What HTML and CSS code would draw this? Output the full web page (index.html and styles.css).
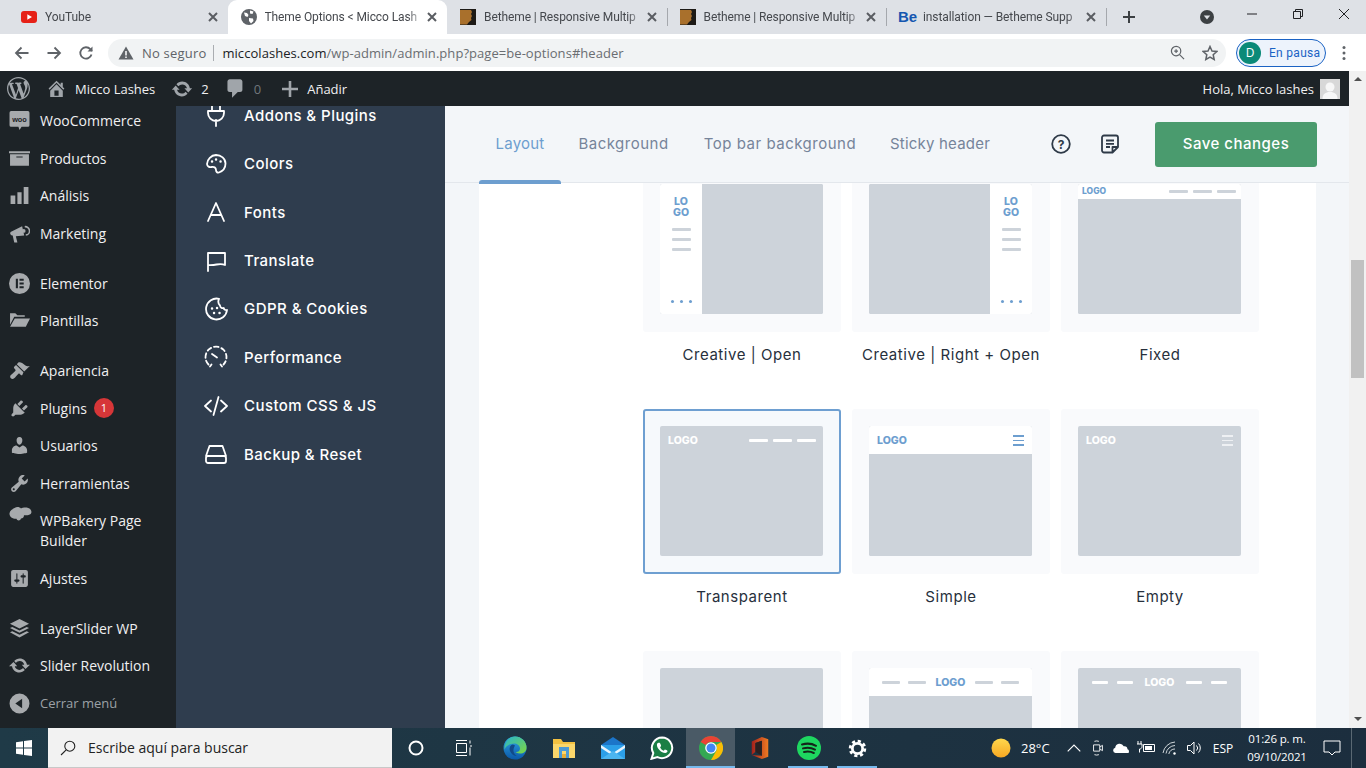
FILE: index.html
```html
<!DOCTYPE html>
<html lang="es">
<head>
<meta charset="utf-8">
<title>Theme Options &lt; Micco Lashes</title>
<link rel="stylesheet" href="styles.css">
</head>
<body>
<div class="tabstrip">
  <div class="tab">
    <svg class="fav" viewBox="0 0 16 16"><rect y="2" width="16" height="12" rx="3" fill="#e62117"/><path d="M6.3 5.2v5.6L11 8z" fill="#fff"/></svg>
    <span class="tab-title">YouTube</span>
    <svg class="tab-x" viewBox="0 0 10 10"><path d="M1 1l8 8M9 1l-8 8"/></svg>
  </div>
  <div class="tab active">
    <svg class="fav" viewBox="0 0 16 16"><circle cx="8" cy="8" r="8" fill="#5f6368"/><path d="M3 3.5l3 .5 1.500 2-1 2-2.500-1zM9 1.500l3.500 1-1 2.500-2.500-.5zM8 9l4 .5.500 2.500-2.500 2.500L8 12z" fill="#fff"/></svg>
    <span class="tab-title">Theme Options &lt; Micco Lash</span>
    <svg class="tab-x" viewBox="0 0 10 10"><path d="M1 1l8 8M9 1l-8 8"/></svg>
  </div>
  <div class="tab sep">
    <svg class="fav" viewBox="0 0 16 16"><rect width="16" height="16" fill="#1d1a16"/><path d="M0 1h11l1 2-1 2 1 2-1 2 .5 2L9 13l-2 2.500H0z" fill="#a9702c"/></svg>
    <span class="tab-title">Betheme | Responsive Multip</span>
    <svg class="tab-x" viewBox="0 0 10 10"><path d="M1 1l8 8M9 1l-8 8"/></svg>
  </div>
  <div class="tab sep">
    <svg class="fav" viewBox="0 0 16 16"><rect width="16" height="16" fill="#1d1a16"/><path d="M0 1h11l1 2-1 2 1 2-1 2 .5 2L9 13l-2 2.500H0z" fill="#a9702c"/></svg>
    <span class="tab-title">Betheme | Responsive Multip</span>
    <svg class="tab-x" viewBox="0 0 10 10"><path d="M1 1l8 8M9 1l-8 8"/></svg>
  </div>
  <div class="tab sep be-tab">
    <span class="be-fav">Be</span>
    <span class="tab-title">installation — Betheme Supp</span>
    <svg class="tab-x" viewBox="0 0 10 10"><path d="M1 1l8 8M9 1l-8 8"/></svg>
  </div>
  <svg class="new-tab" viewBox="0 0 14 14"><path d="M7 1v12M1 7h12"/></svg>
  <svg class="tab-search" viewBox="0 0 16 16"><circle cx="8" cy="8" r="7" fill="#3c4043"/><path d="M4.800 6.500h6.400L8 10.500z" fill="#dee1e6"/></svg>
  <div class="winctl">
    <svg viewBox="0 0 12 12"><path d="M1 6h10"/></svg>
    <svg viewBox="0 0 12 12"><path d="M1.500 3.500h7v7h-7zM3.500 3.500V1.500h7v7h-2"/></svg>
    <svg viewBox="0 0 12 12"><path d="M1 1l10 10M11 1L1 11"/></svg>
  </div>
</div>

<div class="toolbar">
  <svg class="nav-ic" viewBox="0 0 16 16"><path d="M14.500 8H2M7.500 2.500L2 8l5.500 5.500"/></svg>
  <svg class="nav-ic" viewBox="0 0 16 16"><path d="M1.500 8H14M8.500 2.500L14 8l-5.500 5.500"/></svg>
  <svg class="nav-ic" viewBox="0 0 16 16"><path d="M13.500 9.500a5.700 5.700 0 1 1-1.200-5.300L14 6"/><path class="solid" d="M14.500 1.500v5h-5z"/></svg>
  <div class="omni">
    <svg class="warn" viewBox="0 0 16 16"><path d="M8 1.500L15.500 14.500H.5z" fill="#5f6368"/><path d="M8 6v4.500M8 11.500v1.500" stroke="#fff" stroke-width="1.500"/></svg>
    <span class="insecure">No seguro</span>
    <span class="omni-sep"></span>
    <span class="url"><b>miccolashes.com</b>/wp-admin/admin.php?page=be-options#header</span>
    <svg class="omni-zoom" viewBox="0 0 16 16"><circle cx="6.500" cy="6.500" r="5"/><path d="M10.200 10.200L15 15M6.500 4.500v4M4.500 6.500h4"/></svg>
    <svg class="omni-star" viewBox="0 0 16 16"><path d="M8 1.500l2 4.500 4.800.5-3.600 3.200 1 4.800L8 12.100l-4.200 2.400 1-4.800L1.200 6.500 6 6z"/></svg>
  </div>
  <div class="profile">
    <span class="avatar">D</span>
    <span class="paused">En pausa</span>
  </div>
  <svg class="kebab" viewBox="0 0 4 16"><circle cx="2" cy="2.500" r="1.500"/><circle cx="2" cy="8" r="1.500"/><circle cx="2" cy="13.500" r="1.500"/></svg>
</div>

<div class="viewport">
  <div class="wp">
    <div class="adminbar">
      <svg class="ab-ic ab-logo" viewBox="0 0 20 20"><path d="M20 10c0-5.520-4.480-10-10-10S0 4.480 0 10s4.480 10 10 10 10-4.480 10-10zM7.780 15.370L4.370 6.220c.55-.02 1.170-.08 1.170-.08.5-.06.44-1.130-.06-1.110 0 0-1.450.11-2.370.11-.18 0-.37 0-.58-.01C4.120 2.690 6.870 1.110 10 1.110c2.330 0 4.450.87 6.050 2.340-.68-.11-1.650.39-1.650 1.580 0 .74.45 1.360.9 2.100.35.61.55 1.360.55 2.460 0 1.490-1.400 5-1.400 5l-3.030-8.370c.54-.02.82-.17.82-.17.5-.05.44-1.250-.06-1.220 0 0-1.440.12-2.380.12-.87 0-2.330-.12-2.330-.12-.5-.03-.56 1.200-.06 1.220l.92.08 1.260 3.410zM17.410 10c.24-.64.74-1.870.43-4.250.7 1.290 1.050 2.710 1.050 4.250 0 3.290-1.730 6.240-4.400 7.780.97-2.590 1.940-5.200 2.920-7.780zM6.100 18.090C3.120 16.650 1.110 13.530 1.110 10c0-1.300.23-2.480.72-3.590C3.250 10.300 4.670 14.200 6.100 18.090zm4.030-6.630l2.580 6.980c-.86.29-1.760.45-2.710.45-.79 0-1.570-.11-2.290-.33.81-2.380 1.620-4.740 2.420-7.100z"/></svg>
      <svg class="ab-ic ab-home" viewBox="0 0 20 20"><path d="M16 8.500l1.530 1.530-1.060 1.060L10 4.620l-6.470 6.470-1.060-1.060L10 2.500l4 4v-2h2v4zm-6-2.460l6 5.990V18H4v-5.970zM12 17v-5H8v5h4z"/></svg>
      <span class="ab-text ab-site">Micco Lashes</span>
      <svg class="ab-ic ab-upd" viewBox="0 0 20 20"><path d="M10.200 3.280c3.530 0 6.430 2.610 6.920 6h2.080l-3.500 4-3.500-4h2.320c-.45-1.970-2.210-3.450-4.320-3.450-1.450 0-2.730.71-3.540 1.780L4.950 5.660C6.230 4.200 8.110 3.280 10.200 3.280zm-.4 13.440c-3.520 0-6.430-2.610-6.920-6H.8l3.500-4c1.170 1.330 2.330 2.670 3.500 4H5.480c.45 1.970 2.210 3.450 4.320 3.450 1.450 0 2.730-.71 3.540-1.780l1.710 1.950c-1.280 1.460-3.150 2.380-5.250 2.380z"/></svg>
      <span class="ab-text ab-two">2</span>
      <svg class="ab-ic ab-com" viewBox="0 0 20 20"><path d="M5 2h9c1.100 0 2 .9 2 2v7c0 1.100-.9 2-2 2h-2l-5 5v-5H5c-1.100 0-2-.9-2-2V4c0-1.100.9-2 2-2z"/></svg>
      <span class="ab-text ab-zero">0</span>
      <svg class="ab-ic ab-plus" viewBox="0 0 16 16"><path d="M6.700 0h2.600v6.700H16v2.600H9.300V16H6.700V9.300H0V6.700h6.700z"/></svg>
      <span class="ab-text ab-add">Añadir</span>
      <span class="ab-text ab-hola">Hola, Micco lashes</span>
      <svg class="ab-user" viewBox="0 0 20 20"><rect width="20" height="20" fill="#d8d8d8"/><circle cx="10" cy="8" r="4.500" fill="#f7f7f7"/><path d="M2.500 20c0-5 3-7 7.500-7s7.500 2 7.500 7z" fill="#f7f7f7"/></svg>
    </div>

    <div class="page">
      <nav class="side">
        <div class="side-list">
          <div class="si"><svg class="si-ic" viewBox="0 0 20 20"><path d="M2 1h16a1.500 1.500 0 0 1 1.500 1.500v12A1.500 1.500 0 0 1 18 16h-6l-2 3-1-3H2A1.500 1.500 0 0 1 .5 14.500v-12A1.500 1.500 0 0 1 2 1z"/><text x="10" y="11" class="woo">woo</text></svg><span>WooCommerce</span></div>
          <div class="si"><svg class="si-ic" viewBox="0 0 20 20"><path d="M20 3v2H0V3h20zM1 6h18v11H1V6zm12 3V8H7v1h6z"/></svg><span>Productos</span></div>
          <div class="si"><svg class="si-ic" viewBox="0 0 20 20"><path d="M18.500 18V2h-4.500v16h4.500zm-6.500 0V7H8v11h4zm-6 0v-8H1.500v8H6z"/></svg><span>Análisis</span></div>
          <div class="si"><svg class="si-ic" viewBox="0 0 20 20"><path d="M1.500 8.500l11-5.500 2 9-8 .5 1.500 6H5l-1.500-6.500c-2-.2-3-2-2-3.500z"/><path d="M15 3.500a4 4 0 0 1 1 8" fill="none" stroke="#a7aaad" stroke-width="1.500"/><circle cx="14" cy="7.500" r="1.800"/></svg><span>Marketing</span></div>
          <div class="si gap"><svg class="si-ic" viewBox="0 0 20 20"><path fill-rule="evenodd" d="M10 0a10 10 0 1 1 0 20 10 10 0 0 1 0-20zM6.500 5.500v9h2v-9zM10 5.500v1.800h4V5.500zM10 9.100v1.800h4V9.100zM10 12.700v1.800h4v-1.800z"/></svg><span>Elementor</span></div>
          <div class="si"><svg class="si-ic" viewBox="0 0 20 20"><path d="M1 3h5l2 2h7v1.500H5L1 14z"/><path d="M5.500 8H20l-4 8H1z"/></svg><span>Plantillas</span></div>
          <div class="si gap"><svg class="si-ic" viewBox="0 0 20 20"><path d="M14.480 11.060L7.410 3.990l1.500-1.500c.5-.56 2.300-.47 3.510.32 1.210.8 1.430 1.280 2.910 2.100 1.180.64 2.450 1.260 4.450.85zm-.71.710L6.700 4.700 4.930 6.470c-.39.39-.39 1.020 0 1.410l1.060 1.060c.39.39.39 1.030 0 1.420-.6.6-3.330 3.110-4.220 4-.89.89-.89 2.250 0 3.100.89.89 2.230.89 3.120 0 .89-.89 3.330-3.640 3.930-4.240.4-.4 1.030-.4 1.420 0l1.060 1.060c.39.39 1.020.39 1.410 0z"/></svg><span>Apariencia</span></div>
          <div class="si"><svg class="si-ic" viewBox="0 0 20 20"><path d="M13.110 4.360L9.870 7.600 8 5.730l3.240-3.240c.35-.34 1.050-.2 1.560.32.52.51.66 1.210.31 1.550zm-8 1.770l.91-1.120 9.010 9.010-1.190.84c-.71.71-2.630 1.160-3.820 1.160H6.140L4.900 17.260c-.59.59-1.540.59-2.120 0-.59-.58-.59-1.530 0-2.120l1.240-1.240v-3.880c0-1.130.4-3.190 1.090-3.890zm7.260 3.970l3.240-3.240c.34-.35 1.040-.21 1.550.31.52.51.66 1.210.31 1.550l-3.240 3.250z"/></svg><span>Plugins</span><b class="badge">1</b></div>
          <div class="si"><svg class="si-ic" viewBox="0 0 20 20"><path d="M10 9.250c-2.270 0-2.730-3.440-2.730-3.440C7 4.020 7.820 2 9.970 2c2.160 0 2.980 2.020 2.710 3.810 0 0-.41 3.440-2.680 3.440zm0 2.570L12.720 10c2.390 0 4.520 2.330 4.520 4.530v2.490s-3.650 1.130-7.240 1.130c-3.650 0-7.240-1.130-7.240-1.130v-2.490c0-2.250 1.940-4.480 4.470-4.480z"/></svg><span>Usuarios</span></div>
          <div class="si"><svg class="si-ic" viewBox="0 0 20 20"><path d="M16.680 9.770c-1.340 1.340-3.300 1.670-4.950.99l-5.410 6.520c-.99.99-2.590.99-3.580 0s-.99-2.590 0-3.570l6.520-5.420c-.68-1.650-.35-3.610.99-4.950 1.280-1.280 3.120-1.620 4.720-1.060l-2.890 2.890 2.820 2.820 2.860-2.870c.53 1.580.18 3.390-1.080 4.650zM3.810 16.210c.4.39 1.040.39 1.430 0 .4-.4.4-1.040 0-1.430-.39-.4-1.030-.4-1.430 0-.39.39-.39 1.030 0 1.430z"/></svg><span>Herramientas</span></div>
          <div class="si two"><svg class="si-ic cloud" viewBox="0 0 23 18"><path d="M5.500 1C8-.5 10.500 0 12 1.500c2.500-1.500 7.500-1.500 9.500 1 1.800 2.300 1 5-2 5.500-2 .4-3.500 0-4.500.2 0 2.300-1.500 3.300-3 3.300-.5 2.500-4 2.500-4.500.3C3.500 12 .2 9.500.5 6.300.8 3.800 3.500 2 5.500 1z"/></svg><span>WPBakery Page Builder</span></div>
          <div class="si"><svg class="si-ic" viewBox="0 0 20 20"><path d="M18 16V4c0-1.100-.9-2-2-2H4c-1.100 0-2 .9-2 2v12c0 1.100.9 2 2 2h12c1.100 0 2-.9 2-2zM8 11h1c.55 0 1 .45 1 1s-.45 1-1 1H8v1.500c0 .28-.22.5-.5.5s-.5-.22-.5-.5V13H6c-.55 0-1-.45-1-1s.45-1 1-1h1V5.500c0-.28.22-.5.5-.5s.5.22.5.5V11zm5-2h-1c-.55 0-1-.45-1-1s.45-1 1-1h1V5.500c0-.28.22-.5.5-.5s.5.22.5.5V7h1c.55 0 1 .45 1 1s-.45 1-1 1h-1v5.500c0 .28-.22.5-.5.5s-.5-.22-.5-.5V9z"/></svg><span>Ajustes</span></div>
          <div class="si gap"><svg class="si-ic" viewBox="0 0 22 22"><path d="M11 1l10 5-10 5L1 6z"/><path d="M3.500 9.300L11 13l7.500-3.700L21 10.500l-10 5-10-5z"/><path d="M3.500 13.800L11 17.500l7.500-3.700L21 15l-10 5.500L1 15z"/></svg><span>LayerSlider WP</span></div>
          <div class="si"><svg class="si-ic" viewBox="0 0 20 20"><path d="M10.200 3.280c3.530 0 6.430 2.610 6.920 6h2.880l-4.300 4-3.500-4h2.320c-.45-1.970-2.210-3.450-4.320-3.450-1.450 0-2.730.71-3.540 1.780L4.950 5.660C6.230 4.200 8.110 3.280 10.200 3.280zm-.4 13.440c-3.520 0-6.430-2.610-6.920-6H0l4.300-4c1.170 1.330 2.330 2.670 3.500 4H5.480c.45 1.970 2.210 3.450 4.320 3.450 1.450 0 2.730-.71 3.540-1.780l1.710 1.950c-1.280 1.460-3.150 2.380-5.250 2.380z"/></svg><span>Slider Revolution</span></div>
          <div class="si collapse"><svg class="si-ic" viewBox="0 0 20 20"><path fill-rule="evenodd" d="M10 .5a9.500 9.500 0 1 1 0 19 9.500 9.500 0 0 1 0-19zM12.500 5.500L6 10l6.500 4.500z"/></svg><span>Cerrar menú</span></div>
        </div>
      </nav>

      <nav class="benav">
        <div class="be-list">
          <div class="be-i"><svg viewBox="0 0 24 24"><path d="M8 2v6M16 2v6M4 8h16v2a8 8 0 0 1-16 0zM12 17v6"/></svg><span>Addons &amp; Plugins</span></div>
          <div class="be-i"><svg viewBox="0 0 24 24"><path d="M12 3a9.500 9.500 0 0 0-9 9c.2 2.500 2.500 3.500 4.500 3 2.500-.5 4.500.5 4.500 3 0 1.500 1 3 3 2.500 4-1.500 6.500-5 6.500-9C21.500 6.500 17 3 12 3z"/><path class="dot" d="M8 9.500h.1M12 7.500h.1M16.500 9.500h.1"/></svg><span>Colors</span></div>
          <div class="be-i"><svg viewBox="0 0 24 24"><path d="M4 21L12 3l8 18M6.800 15h10.400"/></svg><span>Fonts</span></div>
          <div class="be-i"><svg viewBox="0 0 24 24"><path d="M4 22V4h17v12c-3-1.500-5-1.200-8.500-.5-3 .6-5.500.6-8.500.5"/></svg><span>Translate</span></div>
          <div class="be-i"><svg viewBox="0 0 24 24"><path d="M15 1.800A10.500 10.500 0 1 0 23 13c-1.500.5-3-.3-3.300-2-1.700.5-3.500-.5-3.700-2.500-1.500-1.500-2-4.500-1-6.700z"/><path class="dot" d="M8 11.500h.1M13 11h.1M10 16h.1M15.500 16h.1"/></svg><span>GDPR &amp; Cookies</span></div>
          <div class="be-i"><svg viewBox="0 0 24 24"><path class="dash" d="M4.500 19.500A10.500 10.500 0 1 1 19.500 19.500"/><path d="M8 9l5 3.500"/><path d="M6 21.500l1.500-2M18 21.500l-1.500-2"/></svg><span>Performance</span></div>
          <div class="be-i"><svg viewBox="0 0 24 24"><path d="M7 6.500L1 12l6 5.500M17 6.500l6 5.500-6 5.500M14.500 3l-5 18"/></svg><span>Custom CSS &amp; JS</span></div>
          <div class="be-i"><svg viewBox="0 0 24 24"><path d="M2 14L5.500 4h13L22 14M4 14h16a2 2 0 0 1 2 2v3a2 2 0 0 1-2 2H4a2 2 0 0 1-2-2v-3a2 2 0 0 1 2-2z"/></svg><span>Backup &amp; Reset</span></div>
        </div>
      </nav>

      <main class="main">
        <header class="head">
          <div class="tabs">
            <a class="t t-layout current">Layout</a>
            <a class="t t-bg">Background</a>
            <a class="t t-top">Top bar background</a>
            <a class="t t-sticky">Sticky header</a>
          </div>
          <svg class="h-help" viewBox="0 0 20 20"><circle cx="10" cy="10" r="8.800"/><text x="10" y="14.500" class="qm">?</text></svg>
          <svg class="h-doc" viewBox="0 0 20 20"><path d="M4 1.500h12a2 2 0 0 1 2 2V13l-5.500 5.500H4a2 2 0 0 1-2-2v-13a2 2 0 0 1 2-2zM18 13h-5.500v5.500M6 6.500h8M6 9.800h8M6 13h4"/></svg>
          <button class="save">Save changes</button>
        </header>
        <section class="panel">
          <div class="grid">
            <div class="opt">
              <div class="card"><div class="pv row">
                <div class="sb"><div class="lg blue">LO<br>GO</div><i class="ln"></i><i class="ln"></i><i class="ln"></i><div class="dots"><i></i><i></i><i></i></div></div>
                <div class="fill"></div>
              </div></div>
              <p class="lb">Creative | Open</p>
            </div>
            <div class="opt">
              <div class="card"><div class="pv row">
                <div class="fill"></div>
                <div class="sb"><div class="lg blue">LO<br>GO</div><i class="ln"></i><i class="ln"></i><i class="ln"></i><div class="dots"><i></i><i></i><i></i></div></div>
              </div></div>
              <p class="lb">Creative | Right + Open</p>
            </div>
            <div class="opt">
              <div class="card"><div class="pv">
                <div class="bar thin"><span class="lg small blue">LOGO</span><i class="ln"></i><i class="ln"></i><i class="ln"></i></div>
                <div class="fill"></div>
              </div></div>
              <p class="lb">Fixed</p>
            </div>
            <div class="opt">
              <div class="card sel"><div class="pv">
                <div class="bar clear"><span class="lg">LOGO</span><i class="ln w"></i><i class="ln w"></i><i class="ln w"></i></div>
              </div></div>
              <p class="lb">Transparent</p>
            </div>
            <div class="opt">
              <div class="card"><div class="pv">
                <div class="bar"><span class="lg blue">LOGO</span><span class="burger"><i></i><i></i><i></i></span></div>
                <div class="fill"></div>
              </div></div>
              <p class="lb">Simple</p>
            </div>
            <div class="opt">
              <div class="card"><div class="pv">
                <div class="bar clear"><span class="lg">LOGO</span><span class="burger lt"><i></i><i></i><i></i></span></div>
              </div></div>
              <p class="lb">Empty</p>
            </div>
            <div class="opt">
              <div class="card"><div class="pv"></div></div>
            </div>
            <div class="opt">
              <div class="card"><div class="pv">
                <div class="bar center"><i class="ln"></i><i class="ln"></i><span class="lg blue">LOGO</span><i class="ln"></i><i class="ln"></i></div>
                <div class="fill"></div>
              </div></div>
            </div>
            <div class="opt">
              <div class="card"><div class="pv">
                <div class="bar clear center roomy"><i class="ln w"></i><i class="ln w"></i><span class="lg">LOGO</span><i class="ln w"></i><i class="ln w"></i></div>
              </div></div>
            </div>
          </div>
        </section>
      </main>
    </div>
  </div>
  <div class="scrollbar">
    <span class="arrow up"></span>
    <span class="thumb"></span>
    <span class="arrow down"></span>
  </div>
</div>

<footer class="taskbar">
  <div class="start"><svg viewBox="0 0 16 16"><path d="M0 2.200L7 1.200V7.500H0zM8 1L16 0V7.500H8zM0 8.500H7V14.800L0 13.800zM8 8.500H16V16L8 15z"/></svg></div>
  <div class="search">
    <svg viewBox="0 0 16 16"><circle cx="9.800" cy="6.200" r="5"/><path d="M6.200 9.800L1 15"/></svg>
    <span>Escribe aquí para buscar</span>
  </div>
  <div class="tk-cortana"><svg viewBox="0 0 16 16"><circle cx="8" cy="8" r="6.500"/></svg></div>
  <div class="tk-view"><svg viewBox="0 0 16 16"><path d="M0 .5h11M0 15.500h11M.5 3.500h10v9H.5zM14 .5v3M14 6h2M14 7.500v8"/></svg></div>
  <div class="tk"><svg viewBox="0 0 24 24"><defs><linearGradient id="eb" x1="0" y1="0" x2="0" y2="1"><stop offset="0" stop-color="#2fa6e4"/><stop offset="1" stop-color="#0b58a8"/></linearGradient><linearGradient id="eg" x1="0" y1="0" x2="1" y2="1"><stop offset="0" stop-color="#26b6cf"/><stop offset="1" stop-color="#7fd63f"/></linearGradient></defs><circle cx="12" cy="12" r="11.500" fill="url(#eb)"/><path d="M12 .5A11.500 11.500 0 0 1 23.500 12c0 3.500-3 5.500-6.500 5.500-3 0-4.500-1.500-4.500-1.500 2.500.2 4.500-1 4.500-3.500 0-3-3-5-6-5-4 0-8 2.500-9.500 6C1 6 6 .5 12 .5z" fill="url(#eg)"/><path d="M10 8.500c-3 .5-4 3.500-3 6.500 1 3 4 5 7 5-1-.5-4-3-3.500-6.500.2-2 1-3 1.500-4z" fill="#124a8a"/></svg></div>
  <div class="tk"><svg viewBox="0 0 24 24"><path d="M1 3h8l2 3h12v16H1z" fill="#f3c141"/><path d="M1 8h22v14H1z" fill="#fbd76b"/><path d="M7 11h10v11h-3v-7h-4v7H7z" fill="#4d9ad4"/><path d="M10 18h4v4h-4z" fill="#e8ad34"/></svg></div>
  <div class="tk"><svg viewBox="0 0 24 24"><path d="M12 1L24 9v14H0V9z" fill="#1c75c9"/><path d="M0 9h24v14H0z" fill="#2c9fe8"/><path d="M0 9l12 8 12-8v3L12 20 0 12z" fill="#e8f4fd"/><path d="M0 23L12 15l12 8z" fill="#4cb5f0"/></svg></div>
  <div class="tk"><svg viewBox="0 0 24 24"><path d="M12.200 1.500a10.300 10.300 0 0 0-8.900 15.500L1.500 22.800l6-1.700a10.300 10.300 0 1 0 4.700-19.600z" fill="#1b7f45" stroke="#fff" stroke-width="2"/><path d="M8.500 6.800c-.6 0-1.600.7-1.600 2.300 0 3.500 4.600 8 8.300 8 1.500 0 2.300-1.100 2.300-2 0-.5-2.300-1.700-2.700-1.500l-1 1.200c-1.500-.4-3.300-2.300-3.700-3.600l1-1.100c.2-.4-1-3.300-1.500-3.300z" fill="#fff"/></svg></div>
  <div class="tk on lit"><svg viewBox="0 0 24 24"><circle cx="12" cy="12" r="12" fill="#34a853"/><path d="M12 0a12 12 0 0 1 10.400 6H12a6 6 0 0 0-5.200 3L1.600 6A12 12 0 0 1 12 0z" fill="#ea4335"/><path d="M22.400 6A12 12 0 0 1 12 24l5.200-9a6 6 0 0 0 0-6z" fill="#fbbc05"/><circle cx="12" cy="12" r="5.800" fill="#fff"/><circle cx="12" cy="12" r="4.500" fill="#4285f4"/></svg></div>
  <div class="tk"><svg class="tk-office" viewBox="0 0 24 24"><defs><linearGradient id="of" x1="0" y1="0" x2="1" y2="0"><stop offset="0" stop-color="#a3201c"/><stop offset="1" stop-color="#ef7b22"/></linearGradient></defs><path d="M3 5L14 0l7 2.500v19L14 24 3 19.500l11 1V4L7 6.500V16l-4 3.500z" fill="url(#of)"/><path d="M7 6.500L14 4v16.500L7 16z" fill="#2a2020"/></svg></div>
  <div class="tk on short"><svg viewBox="0 0 24 24"><circle cx="12" cy="12" r="12" fill="#1ed760"/><path d="M5 8.500c4.500-1.300 10-1 14 1.300M6 12.400c4-1.100 8.500-.7 12 1.200M7 16c3.500-.8 7-.4 9.800 1" fill="none" stroke="#14261a" stroke-width="2" stroke-linecap="round"/></svg></div>
  <div class="tk on short"><svg class="tk-gear" viewBox="0 0 24 24"><circle cx="12" cy="12" r="6.500" fill="none" stroke="#fff" stroke-width="3.500"/><circle cx="12" cy="12" r="9.300" fill="none" stroke="#fff" stroke-width="3.500" stroke-dasharray="4 3.300"/></svg></div>

  <div class="tray">
    <svg class="sun" viewBox="0 0 20 20"><defs><linearGradient id="sg" x1="0" y1="0" x2="0" y2="1"><stop offset="0" stop-color="#ffd84d"/><stop offset="1" stop-color="#f7a823"/></linearGradient></defs><circle cx="10" cy="10" r="9.500" fill="url(#sg)"/></svg>
    <span class="temp">28°C</span>
    <svg class="tr" viewBox="0 0 14 14"><path d="M1.500 10L7 4.500 12.500 10"/></svg>
    <svg class="tr" viewBox="0 0 14 18"><path d="M3 1.500a7 7 0 0 1 5 0M3 16.500a7 7 0 0 0 5 0M2 5.500h7v7H2zM9 8l3-2v6l-3-2"/></svg>
    <svg class="tr" viewBox="0 0 24 16"><path class="solid-w" d="M5.500 13a2.700 2.700 0 0 1-.3-5.300 4.500 4.500 0 0 1 8.500-1.500 3.300 3.300 0 0 1 3.800 3c1.500.3 2 2.500 1 3.800z"/></svg>
    <svg class="tr" viewBox="0 0 24 16"><path d="M9.500 4.500h11v7h-11zM4 1v3M7 1v3M3 4h5v2.500C8 8 7 9 5.500 9v3.500"/><path class="solid-w" d="M11 6h7v4h-7z"/></svg>
    <svg class="tr" viewBox="0 0 16 16"><path class="thin-w" d="M1 13a13 13 0 0 1 12-11M4 13.500A9.500 9.500 0 0 1 13 5.500M6.800 14A6 6 0 0 1 13 9"/><circle class="solid-w" cx="12.500" cy="13.500" r="1.200"/></svg>
    <svg class="tr" viewBox="0 0 16 16"><path d="M1.500 5.500h3L8 2v12l-3.500-3.500h-3zM10.500 5.500a3.500 3.500 0 0 1 0 5M12.500 3.500a6.500 6.500 0 0 1 0 9"/></svg>
    <span class="lang">ESP</span>
    <div class="clock"><span>01:26 p. m.</span><span>09/10/2021</span></div>
    <svg class="notif" viewBox="0 0 18 16"><path d="M1 1h16v11h-5l-3 3-3-3H1z"/></svg>
    <span class="desktop"></span>
  </div>
</footer>
</body>
</html>
```
FILE: styles.css
```css
* { box-sizing: border-box; }
html, body { margin: 0; height: 768px; width: 1366px; overflow: hidden; }
body { display: flex; flex-direction: column; font-family: "Open Sans", "Noto Sans", sans-serif; background: #fff; }
svg { display: block; flex: none; }

/* tab strip */
.tabstrip { height: 34px; background: #dee1e6; display: flex; align-items: center; padding-left: 8px; flex: none; }
.tab { width: 219.5px; height: 34px; display: flex; align-items: center; padding: 0 7px 0 13px; position: relative; flex: none; }
.tab.active { background: #fff; border-radius: 9px 9px 0 0; }
.tab.be-tab { padding-left: 12px; }
.tab.sep::after { content: ""; position: absolute; right: -1px; top: 8px; height: 18px; width: 1px; background: #a5a8ad; }
.fav { width: 16px; height: 16px; }
.be-fav { width: 18px; margin-right: 7px; color: #1557b0; font: 700 15px/16px "Liberation Sans", sans-serif; flex: none; }
.tab-title { flex: 1; margin-left: 8px; font: 400 12px Roboto, "Open Sans", sans-serif; letter-spacing: -.1px; color: #45484d; white-space: nowrap; overflow: hidden; -webkit-mask-image: linear-gradient(90deg, #000 92%, rgba(0,0,0,.25) 100%); mask-image: linear-gradient(90deg, #000 92%, rgba(0,0,0,.25) 100%); }
.be-tab .tab-title { margin-left: 0; }
.tab-x { width: 10px; height: 10px; margin: 0 3px 0 7px; fill: none; stroke: #5a5d62; stroke-width: 2; }
.new-tab { width: 14px; height: 14px; margin-left: 16px; fill: none; stroke: #3c4043; stroke-width: 2; }
.tab-search { width: 16px; height: 16px; margin-left: 63px; }
.winctl { display: flex; margin-left: 14px; align-self: flex-start; }
.winctl svg { width: 46px; height: 28px; padding: 8px 17px; fill: none; stroke: #202124; stroke-width: 1; }

/* toolbar */
.toolbar { height: 37px; flex: none; display: flex; align-items: center; background: #fff; padding-left: 14px; }
.nav-ic { width: 16px; height: 16px; margin-right: 16px; fill: none; stroke: #5f6368; stroke-width: 1.800; }
.nav-ic .solid { fill: #5f6368; stroke: none; }
.toolbar .omni { margin-left: -2px; }
.omni { width: 1118px; height: 28px; border-radius: 14px; background: #f1f3f4; display: flex; align-items: center; padding-left: 10px; }
.warn { width: 16px; height: 16px; }
.insecure { margin-left: 8px; font-size: 13px; letter-spacing: .2px; color: #5f6368; }
.omni-sep { width: 1px; height: 16px; background: #aaadb1; margin: 0 8px 0 7px; }
.url { font-size: 13px; letter-spacing: .05px; color: #6a6d71; }
.url b { font-weight: 400; color: #202124; }
.omni-zoom { width: 15px; height: 15px; margin-left: auto; fill: none; stroke: #5f6368; stroke-width: 1.300; }
.omni-star { width: 16px; height: 16px; margin: 0 8px 0 17px; fill: none; stroke: #5f6368; stroke-width: 1.500; }
.profile { width: 90px; height: 28px; margin-left: 10px; border: 1px solid #1a62c4; border-radius: 14px; background: #edf3fc; display: flex; align-items: center; padding-left: 2px; }
.avatar { width: 22px; height: 22px; border-radius: 50%; background: #0b8a78; color: #fff; font-size: 12px; line-height: 22px; text-align: center; }
.paused { margin-left: 8px; font: 400 12px Roboto, "Open Sans", sans-serif; letter-spacing: .3px; color: #1a62c4; }
.kebab { width: 4px; height: 16px; margin-left: 16px; fill: #5f6368; }

/* viewport */
.viewport { flex: 1; display: flex; min-height: 0; }
.wp { flex: 1; min-width: 0; display: flex; flex-direction: column; }
.scrollbar { width: 17px; background: #f1f1f1; display: flex; flex-direction: column; align-items: center; flex: none; }
.arrow { width: 0; height: 0; border-left: 4px solid transparent; border-right: 4px solid transparent; margin-top: 6px; }
.arrow.up { border-bottom: 4px solid #505050; }
.arrow.down { border-top: 4px solid #505050; margin-top: auto; margin-bottom: 7px; }
.thumb { width: 13px; height: 118px; background: #c1c1c1; margin-top: 179px; }

/* admin bar */
.adminbar { height: 35px; background: #1d2327; display: flex; align-items: center; flex: none; padding-right: 9px; }
.ab-ic { fill: #a0a5aa; }
.ab-logo { width: 23px; height: 23px; margin-left: 7px; }
.ab-home { width: 21px; height: 21px; margin-left: 16px; }
.ab-text { font-size: 13px; color: #f0f0f1; white-space: nowrap; }
.ab-site { margin-left: 8px; }
.ab-upd { width: 22px; height: 22px; margin-left: 16px; }
.ab-two { margin-left: 8px; }
.ab-com { width: 23px; height: 23px; margin-left: 15px; }
.ab-zero { margin-left: 7px; color: #70767b; }
.ab-plus { width: 16px; height: 16px; margin-left: 21px; }
.ab-add { margin-left: 9px; }
.ab-hola { margin-left: auto; }
.ab-user { width: 20px; height: 20px; margin-left: 6px; }

/* page */
.page { flex: 1; display: flex; min-height: 0; overflow: hidden; }
.side { width: 176px; background: #1d2327; flex: none; overflow: hidden; }
.side-list { margin-top: -4px; }
.si { height: 37.500px; display: flex; align-items: center; padding-left: 9px; color: #f0f0f1; font-size: 14px; }
.si.gap { margin-top: 12.500px; }
.si.two { height: 57.500px; }
.si.two span { line-height: 20px; width: 120px; }
.si.two .si-ic { align-self: flex-start; margin-top: 5px; }
.si.collapse { color: #9ca1a6; font-size: 13px; }
.si-ic { width: 21px; height: 21px; margin-right: 10px; fill: #a7aaad; }
.si-ic.cloud { width: 23px; height: 18px; margin-right: 8px; }
.woo { font: 700 7px "Liberation Sans", sans-serif; fill: #1d2327; text-anchor: middle; }
.badge { width: 20px; height: 20px; margin-left: 7px; border-radius: 50%; background: #d63638; color: #fff; font-size: 11px; font-weight: 400; line-height: 20px; text-align: center; }

/* theme nav */
.benav { width: 269px; background: #2f3d4e; flex: none; overflow: hidden; }
.be-list { margin-top: -14.800px; }
.be-i { height: 48.400px; display: flex; align-items: center; padding-left: 28px; gap: 16px; color: #fff; font-size: 15px; letter-spacing: .45px; font-weight: 500; font-family: Inter, "Open Sans", sans-serif; white-space: nowrap; }
.be-i svg { width: 24px; height: 24px; fill: none; stroke: #fff; stroke-width: 1.800; stroke-linecap: round; stroke-linejoin: round; }
.be-i .dot { stroke-width: 2.400; }
.be-i .dash { stroke-dasharray: 4.500 3; }

/* main */
.main { flex: 1; min-width: 0; background: #f3f6f9; display: flex; flex-direction: column; }
.head { height: 77px; flex: none; border-bottom: 1px solid #e3e7ec; display: flex; align-items: center; padding-left: 34px; padding-right: 32px; }
.tabs { display: flex; align-self: stretch; height: 77px; }
.t { position: relative; padding-bottom: 2px; display: flex; align-items: center; justify-content: center; color: #76849a; font: 400 15px Inter, "Open Sans", sans-serif; letter-spacing: .5px; white-space: nowrap; }
.t-layout { width: 82px; }
.t-bg { width: 125px; }
.t-top { width: 188px; }
.t-sticky { width: 132px; letter-spacing: .2px; }
.t.current { color: #6d9ecf; letter-spacing: .2px; }
.t.current::after { content: ""; position: absolute; left: 0; right: 0; bottom: -1px; height: 4px; border-radius: 3px 3px 0 0; background: #6d9ecf; }
.h-help { width: 20px; height: 20px; margin-left: 45px; fill: none; stroke: #2e3a48; stroke-width: 1.800; }
.qm { font: 700 12px Inter, sans-serif; fill: #2e3a48; stroke: none; text-anchor: middle; }
.h-doc { width: 20px; height: 20px; margin-left: 29px; fill: none; stroke: #2e3a48; stroke-width: 1.800; stroke-linejoin: round; }
.save { margin-left: auto; width: 162px; height: 45px; border: 0; border-radius: 3px; padding: 0 0 2px; background: #4a9b6e; color: #fff; font: 500 15px Inter, "Open Sans", sans-serif; letter-spacing: .5px; }

.panel { flex: 1; min-height: 0; margin: 0 33px 0 34px; background: #fff; overflow: hidden; }
.grid { display: grid; grid-template-columns: repeat(3, 198px); column-gap: 11px; row-gap: 31px; margin: -16px 0 0 164px; }
.card { height: 165px; padding: 17px 18px 18px 17px; background: #f9fafc; border-radius: 3px; }
.card.sel { box-shadow: inset 0 0 0 2px #6e9fd1; background: #f6f9fc; }
.lb { margin: 0; height: 46px; text-align: center; font: 400 15px/46px Inter, "Open Sans", sans-serif; letter-spacing: .55px; color: #27303c; white-space: nowrap; }

.pv { height: 130px; width: 163px; background: #cdd3da; border-radius: 2px; overflow: hidden; display: flex; flex-direction: column; }
.pv.row { flex-direction: row; }
.fill { flex: 1; background: #cdd3da; }
.sb { width: 42px; background: #fff; display: flex; flex-direction: column; align-items: center; padding: 12px 0 11px; }
.lg { font: 800 10.500px/11px Inter, sans-serif; color: #fff; text-align: center; }
.lg.blue { color: #6d9ecf; }
.lg.small { font-size: 8.500px; }
.ln { display: block; width: 19px; height: 3px; background: #cdd3da; border-radius: 1px; flex: none; }
.ln.w { background: #fff; }
.sb .lg { margin-bottom: 9.500px; }
.sb .ln { margin-bottom: 7px; }
.dots { margin-top: auto; display: flex; gap: 6px; }
.dots i { width: 3px; height: 3px; border-radius: 50%; background: #6d9ecf; }
.bar { height: 28px; background: #fff; display: flex; align-items: center; gap: 5px; padding: 1px 7px 0 8px; flex: none; }
.bar.clear { background: transparent; }
.bar.thin { height: 15px; padding: 0 5px 0 4px; }
.bar .lg { margin-right: auto; }
.bar.center { justify-content: center; gap: 8px; padding: 1px 0 0; }
.bar.center .lg { margin: 0 2px; }
.bar.center .ln { width: 18px; }
.bar.roomy { gap: 9px; }
.bar.roomy .ln { width: 16px; }
.bar.roomy .lg { margin: 0 3px; }
.burger { display: flex; flex-direction: column; gap: 3px; width: 11px; margin-right: 1px; }
.burger i { height: 1.500px; background: #6d9ecf; }
.burger.lt i { background: #eef0f3; }

/* taskbar */
.taskbar { height: 40px; flex: none; display: flex; background: linear-gradient(90deg, #1f3a47, #1c2e3e); color: #fff; }
.start { width: 48px; display: flex; align-items: center; justify-content: center; }
.start svg { width: 16px; height: 16px; fill: #fff; }
.search { width: 344px; background: #f2f2f2; border-bottom: 1px solid #c8c8c8; display: flex; align-items: center; padding-left: 12px; gap: 12px; color: #222; font-size: 14px; }
.search svg { width: 16px; height: 16px; fill: none; stroke: #222; stroke-width: 1.100; }
.tk-cortana { width: 48px; display: flex; align-items: center; justify-content: center; }
.tk-cortana svg { width: 16px; height: 16px; fill: none; stroke: #fff; stroke-width: 2; }
.tk-view { width: 50px; display: flex; align-items: center; justify-content: center; padding-right: 3px; }
.tk-view svg { width: 16px; height: 16px; fill: none; stroke: #fff; stroke-width: 1; }
.tk { width: 49px; display: flex; align-items: center; justify-content: center; position: relative; }
.tk svg { width: 24px; height: 24px; }
.tk svg.tk-gear { width: 19px; height: 19px; }
.tk svg.tk-office { width: 22px; height: 22px; }
.tk.lit { background: #4a5a66; }
.tk.on::after { content: ""; position: absolute; left: 0; right: 0; bottom: 0; height: 2px; background: #76b9ed; }
.tk.on.short::after { left: 4px; right: 5px; }
.tray { margin-left: auto; display: flex; align-items: center; }
.sun { width: 20px; height: 20px; }
.temp { width: 30px; margin: 0 11px 0 10px; font-size: 13px; white-space: nowrap; }
.tr { width: 24px; height: 16px; fill: none; stroke: #fff; stroke-width: 1; }
.tr .solid-w { fill: #fff; stroke: none; }
.tr .thin-w { stroke: #cfd6da; }
.lang { width: 34px; text-align: center; font-size: 12px; }
.clock { width: 74px; display: flex; flex-direction: column; align-items: center; font-size: 11.500px; letter-spacing: -.15px; line-height: 18px; }
.notif { width: 36px; height: 16px; fill: none; stroke: #fff; stroke-width: 1; }
.desktop { width: 15px; height: 40px; border-left: 1px solid #5a6873; margin-left: 1px; }
```
